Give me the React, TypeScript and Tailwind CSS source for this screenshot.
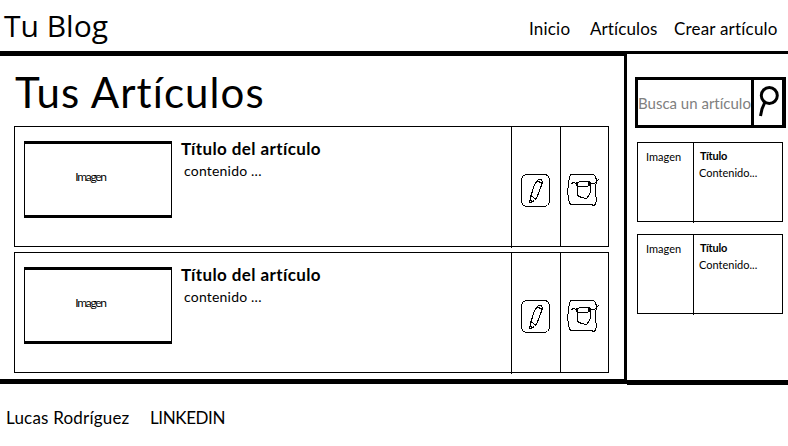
import React from 'react';

function PencilIcon() {
  return (
    <svg width="31" height="35" viewBox="0 0 31 35" fill="none" stroke="#000" shapeRendering="crispEdges">
      <path d="M5.5 .5H25.5L27.5 1.5L29.5 4.5V28.5L27.5 31.5L24.5 32.5H6.5L3.5 31.5L1.5 28.5V5.5L2.5 2.5Z" transform="translate(-1 0)" />
      <path d="M14.5 8.5L17.5 5.5H20.5L21.5 8.5L18.5 16.5L15.5 24.5L13.5 26.5L9.5 28.5H8.5L9.5 23.5L12.5 13.5L14.5 8.5L17.5 7.5L21.5 9.5M9.5 21.5L15.5 25.5M9.5 26.5L11.5 27.5" />
    </svg>
  );
}

function TrashIcon() {
  return (
    <svg width="34" height="35" viewBox="0 0 34 35" fill="none" stroke="#000" shapeRendering="crispEdges">
      <path d="M3.5 .5H26.5L28.5 2.5L29.5 6.5L28.5 14.5V20.5L29.5 25.5L28.5 30.5L26.5 31.5L24.5 30.5H4.5L2.5 29.5L1.5 23.5L.5 18.5L1.5 9.5L2.5 3.5Z" />
      <path d="M4.5 9.5L6.5 8.5L9.5 9.5L12.5 7.5H22.5L24.5 9.5L27.5 9.5L31.5 5.5M9.5 9.5L10.5 12.5H20.5L22.5 9.5M10.5 12.5V21.5L14.5 23.5L19.5 24.5L22.5 20.5L23.5 17.5V9.5" />
      <path d="M9 8H11V12H9ZM21 8H24V12H21Z" fill="#000" stroke="none" />
    </svg>
  );
}

function Article() {
  return (
    <article className="flex h-[121px] w-[595px] border border-black">
      <div className="flex w-[496px] pl-[9px] pt-[14px]">
        <div className="flex h-[77px] w-[148px] shrink-0 justify-center border-x border-y-[3px] border-black pr-[15px] pt-[24px]">
          <span className="text-[12px] leading-[18px] tracking-[-1.3px]">Imagen</span>
        </div>
        <div className="pl-[9px]">
          <h2 className="-mt-px text-[17px] font-bold leading-[18px] tracking-[0.4px]">Título del artículo</h2>
          <p className="pl-[3px] pt-[4px] text-[14px] leading-[18px] tracking-[0.2px]">contenido ...</p>
        </div>
      </div>
      <div className="-mb-[2px] w-[49px] border-l border-black pl-[9px] pt-[47px]"><PencilIcon /></div>
      <div className="flex-1 border-l border-black pl-[6px] pt-[47px]"><TrashIcon /></div>
    </article>
  );
}

function SideCard() {
  return (
    <article className="flex h-[80px] w-[146px] border border-black text-[11px] leading-[14px]">
      <div className="w-[55px] pl-[8px] pt-[7px]">Imagen</div>
      <div className="-mb-[2px] flex-1 border-l border-black pl-[5px] pt-[6px]">
        <h3 className="pl-px font-bold tracking-[-0.2px]">Título</h3>
        <p className="pt-[3px]">Contenido...</p>
      </div>
    </article>
  );
}

export default function App() {
  return (
    <div className="h-[446px] w-[788px] overflow-hidden bg-white font-['Lato',sans-serif] text-black [font-variant-ligatures:none]">
      <header className="flex h-[54px] justify-between border-b-[3px] border-black pl-[4px] pr-[10px]">
        <h1 className="pt-[6px] font-['Open_Sans',sans-serif] text-[30px] leading-[40px]">Tu Blog</h1>
        <nav className="flex pt-[18px] text-[17px] leading-[22px]">
          <span className="w-[61px] tracking-[0.2px]">Inicio</span>
          <span className="w-[84px] tracking-[0.1px]">Artículos</span>
          <span className="w-[104px] whitespace-nowrap tracking-[0.2px]">Crear artículo</span>
        </nav>
      </header>
      <div className="flex h-[331px]">
        <main className="h-[330px] w-[627px] border-b-[5px] border-r-[3px] border-t-2 border-black pl-[14px]">
          <h1 className="h-[70px] pl-[1px] pt-[10px] text-[42px] leading-[52px] tracking-[1.1px]">Tus Artículos</h1>
          <div className="flex flex-col gap-[5px]"><Article /><Article /></div>
        </main>
        <aside className="flex-1 border-b-[5px] border-black pl-[8px] pt-[23px]">
          <div className="flex h-[51px] w-[151px] border-[3px] border-r-4 border-black">
            <div className="w-[113px] whitespace-nowrap pt-[13px] text-[15px] leading-[20px] text-[#808080]">Busca un artículo</div>
            <div className="flex-1 border-l-[3px] border-black">
              <svg width="28" height="45" viewBox="0 0 28 45" fill="none" stroke="#000" strokeWidth="3">
                <circle cx="15.3" cy="15.5" r="8" />
                <path d="M11 22L8 29L6.5 36" />
              </svg>
            </div>
          </div>
          <div className="flex flex-col gap-[12px] pl-[2px] pt-[14px]"><SideCard /><SideCard /></div>
        </aside>
      </div>
      <footer className="flex pl-[6px] pt-[22px] text-[17px] leading-[22px]">
        <span className="w-[144px] tracking-[0.2px]">Lucas Rodríguez</span><span className="tracking-[-0.4px]">LINKEDIN</span>
      </footer>
    </div>
  );
}
